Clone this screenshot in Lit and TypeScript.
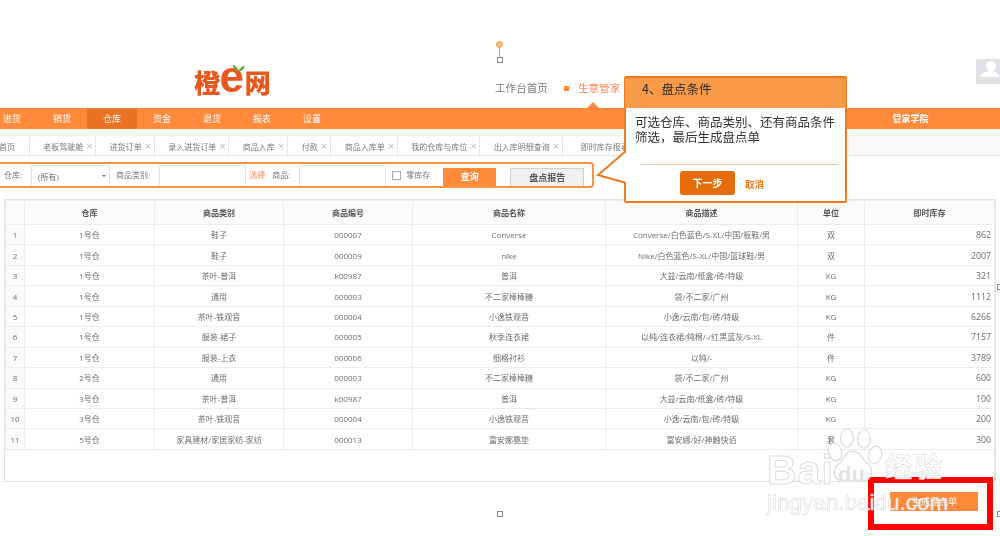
import { LitElement, html, css, svg } from "lit";
import { customElement } from "lit/decorators.js";

const NAV = ["进货", "销货", "仓库", "资金", "退货", "报表", "设置"];
const TABS: [string, number, boolean][] = [
  ["首页", 30, false], ["老板驾驶舱", 66, true], ["进货订单", 59, true], ["录入进货订单", 74, true],
  ["商品入库", 59, true], ["付款", 43, true], ["商品入库单", 67, true], ["我的仓库与库位", 82, true],
  ["出入库明细查询", 83, true], ["即时库存报表", 83, true],
];
const HEAD = ["", "仓库", "商品类别", "商品编号", "商品名称", "商品描述", "单位", "即时库存"];
const ROWS = [
  ["1号仓", "鞋子", "000007", "Converse", "Converse/白色蓝色/S-XL/中国/板鞋/男", "双", "862"],
  ["1号仓", "鞋子", "000009", "nike", "Nike/白色蓝色/S-XL/中国/篮球鞋/男", "双", "2007"],
  ["1号仓", "茶叶-普洱", "k00987", "普洱", "大益/云南/纸盒/砖/特级", "KG", "321"],
  ["1号仓", "通用", "000003", "不二家棒棒糖", "袋/不二家/广州", "KG", "1112"],
  ["1号仓", "茶叶-铁观音", "000004", "小逸铁观音", "小逸/云南/包/砖/特级", "KG", "6266"],
  ["1号仓", "服装-裙子", "000005", "秋季连衣裙", "以纯/连衣裙/纯棉/-/红黑蓝灰/S-XL", "件", "7157"],
  ["1号仓", "服装-上衣", "000006", "细格衬衫", "以纯/-", "件", "3789"],
  ["2号仓", "通用", "000003", "不二家棒棒糖", "袋/不二家/广州", "KG", "600"],
  ["3号仓", "茶叶-普洱", "k00987", "普洱", "大益/云南/纸盒/砖/特级", "KG", "100"],
  ["3号仓", "茶叶-铁观音", "000004", "小逸铁观音", "小逸/云南/包/砖/特级", "KG", "200"],
  ["5号仓", "家具建材/家居家纺-家纺", "000013", "富安娜靠垫", "富安娜/好/抻触快佰", "套", "300"],
];
const COLS = [19, 130, 129, 129, 193, 192, 67, 130];

@customElement("app-root")
export class AppRoot extends LitElement {
  static styles = css`
    :host { display: block; width: 1000px; height: 536px; overflow: hidden; background: #fff; }
    .page {
      position: relative; width: 1000px; height: 536px; overflow: hidden; background: #fff;
      font-family: "Open Sans", "Noto Sans CJK SC", sans-serif; font-size: 8px; color: #666;
      filter: blur(0.35px);
    }
    .top { height: 108px; box-sizing: border-box; display: flex; align-items: flex-start; padding-left: 194px; }
    .logo {
      position: relative; margin-top: 65px; width: 77px; height: 34px; display: flex; align-items: center;
      color: #e8581c; font-family: "Noto Sans CJK SC", sans-serif; font-weight: 900; font-size: 26.5px; line-height: 34px;
    }
    .logo .e { font-family: "Liberation Sans", sans-serif; font-size: 44px; line-height: 34px; width: 24px; text-align: center; font-weight: 700; transform: translate(-1px, -5px); flex: none; }
    .leaf { position: absolute; left: 38px; top: -1px; }
    .links { margin-left: 224px; margin-top: 81px; display: flex; align-items: center; font-size: 10.6px; line-height: 14px; color: #777; }
    .dot { width: 5px; height: 5px; background: #ff8a3c; margin-left: 16px; margin-right: 9px; }
    .cur { color: #ff8a5c; }
    .caret { position: absolute; left: 587px; top: 102px; width: 0; height: 0; border: 6px solid transparent; border-top: 0; border-bottom-color: #ff8a3c; }
    .nav { height: 21px; background: #ff8a3c; border-top: 1px solid #f58232; box-sizing: border-box; display: flex; margin-left: 0; color: #fff; font-size: 9px; line-height: 20px; overflow: hidden; }
    .nav .items { display: flex; margin-left: -13px; }
    .nav .it { width: 50px; text-align: center; }
    .nav .on { background: #ea7224; }
    .nav .academy { margin-left: auto; margin-right: 71px; width: 37px; text-align: center; font-weight: 700; white-space: nowrap; }
    .tabs { height: 27px; box-sizing: border-box; background: #fafafa; border-bottom: 1px solid #e4e4e4; padding-top: 8px; display: flex; font-size: 8px; color: #777; line-height: 17px; overflow: hidden; }
    .tab { box-sizing: border-box; border-right: 1px solid #e6e6e6; background: #fff; display: flex; justify-content: center; align-items: center; gap: 3px; white-space: nowrap; flex: none; padding-left: 11px; }
    .tab.first { padding: 0 14px 0 0; justify-content: flex-end; }
    .tab i { font-style: normal; color: #bbb; font-size: 11px; font-family: "Liberation Sans", sans-serif; }
    .filter {
      margin: 6px 0 0 -6px; width: 600px; height: 26px; box-sizing: border-box; border: 2px solid #fb9347; border-radius: 4px;
      display: flex; align-items: flex-end; padding-left: 8px; font-size: 8px; color: #777; overflow: hidden;
    }
    .filter > * { flex: none; }
    .lb { height: 22px; line-height: 22px; white-space: nowrap; }
    .sel { width: 79px; height: 21px; box-sizing: border-box; margin-left: 9px; border: 1px solid #e4e4e4; border-bottom: 0; padding-left: 6px; display: flex; align-items: center; justify-content: space-between; padding-right: 3px; color: #666; }
    .sel b { width: 0; height: 0; border: 2.5px solid transparent; border-bottom: 0; border-top-color: #666; }
    .inp { height: 21px; box-sizing: border-box; width: 87px; border: 1px solid #e4e4e4; border-bottom: 0; background: #fff; }
    .pick { color: #ff8a5c; margin-left: 3px; }
    .chk { width: 9px; height: 9px; border: 1px solid #aaa; box-sizing: border-box; margin: 0 5px 6px 6px; }
    .go { width: 53px; height: 18px; line-height: 18px; background: #ff8a3c; color: #fff; text-align: center; font-weight: 700; font-size: 9px; margin-left: 13px; }
    .rep { width: 74px; height: 18px; line-height: 17px; box-sizing: border-box; background: #f0f0f0; border: 1px solid #cfcfcf; border-bottom: 0; color: #555; text-align: center; font-weight: 700; font-size: 9px; margin-left: 14px; }
    .frame { margin: 11px 0 0 4px; width: 992px; height: 283px; box-sizing: border-box; border: 1px solid #e2e2e2; border-width: 1px 2px 1px 1px; }
    table { border-collapse: collapse; table-layout: fixed; width: 989px; }
    th, td { border: 1px solid #ececec; text-align: center; padding: 0; overflow: hidden; white-space: nowrap; font-weight: 400; }
    th { height: 23px; background: #fbfbfb; color: #555; font-weight: 700; }
    td { height: 19.45px; color: #6c6c6c; }
    td:first-child { background: #fafafa; }
    td:last-child { text-align: right; padding: 1px 3px 0 0; height: 18.45px; font-size: 8.8px; }
    .foot { display: flex; justify-content: flex-end; padding-right: 22px; margin-top: 10px; }
    .save { width: 88px; height: 19px; line-height: 19px; background: #ff8a3c; color: #fff; font-size: 9px; font-weight: 400; text-align: right; padding-right: 21px; box-sizing: border-box; }
    .handle { position: absolute; width: 4px; height: 4px; border: 1px solid #888; background: #fff; }
    .h-top { left: 497px; top: 57px; }
    .h-bot { left: 497px; top: 511px; }
    .h-r1 { left: 997px; top: 284px; }
    .h-r2 { left: 997px; top: 511px; }
    .knob { position: absolute; left: 496px; top: 41px; width: 5px; height: 5px; border: 1px solid #f59a3c; background: #fbc58c; border-radius: 50%; }
    .stem { position: absolute; left: 499px; top: 48px; width: 1px; height: 9px; background: #f59a3c; }
    .avatar { position: absolute; left: 976px; top: 59px; }
    .callout { position: absolute; left: 624px; top: 76px; width: 223px; height: 127px; box-sizing: border-box; border: 2px solid #ee7a1c; border-radius: 2px; background: #fff; font-family: "Noto Sans CJK SC", sans-serif; }
    .c-head { height: 30px; background: #f99a48; color: #2a2a2a; font-size: 12.5px; line-height: 22px; padding-left: 17px; margin: 0 -1px; }
    .c-body { padding: 7px 0 0 9px; font-size: 12.5px; line-height: 14.5px; color: #333; height: 39px; width: 205px; }
    .c-line { margin: 10px 7px 0 15px; height: 1px; background: #ffc89a; }
    .c-act { display: flex; align-items: center; margin: 6px 0 0 54px; }
    .next { width: 55px; height: 24px; line-height: 23px; background: #e46c0a; border-radius: 3px; color: #fff; text-align: center; font-weight: 700; font-size: 10px; }
    .cancel { margin-left: 10px; color: #ee7a1c; font-weight: 700; font-size: 9.5px; padding-top: 2px; }
    .ptr { position: absolute; left: 595px; top: 148px; }
    .red { position: absolute; left: 868px; top: 477px; width: 125px; height: 53px; box-sizing: border-box; border: 6px solid #ff0000; }
    .wm { position: absolute; left: 0; top: 0; width: 1000px; height: 536px; pointer-events: none; }
    .wm-text { position: absolute; color: rgba(255,255,255,.9); -webkit-text-stroke: 0.7px #dedede; white-space: nowrap; font-family: "Liberation Sans", sans-serif; }
    .bai { left: 767px; top: 450px; font-size: 41px; line-height: 40px; font-weight: 700; letter-spacing: 1px; -webkit-text-stroke: 1px #dcdcdc; }
    .du { left: 838px; top: 463px; font-size: 22px; line-height: 24px; color: #e2e2e2; font-weight: 700; -webkit-text-stroke: 0; }
    .jing { left: 885px; top: 450px; font-size: 27px; line-height: 32px; font-family: "Noto Sans CJK SC", sans-serif; font-weight: 700; letter-spacing: 3px; }
    .url { left: 767px; top: 489px; font-size: 22.5px; line-height: 28px; }
  `;

  render() {
    return html`<div class="page">
      <div class="top">
        <div class="logo">
          <span>橙</span><span class="e">e</span><span>网</span>
          <svg class="leaf" width="14" height="9" viewBox="0 0 14 9"><path d="M6 8C4 7 1 5 1 1c3 0 5 3 5 7z" fill="#6fae2e"/><path d="M7 8c0-4 3-6 6-6-1 3-3 5-6 6z" fill="#6fae2e"/></svg>
        </div>
        <div class="links"><span>工作台首页</span><span class="dot"></span><span class="cur">生意管家</span></div>
      </div>
      <div class="nav">
        <div class="items">${NAV.map((n, i) => html`<div class="it ${i === 2 ? "on" : ""}">${n}</div>`)}</div>
        <div class="academy">管家学院</div>
      </div>
      <div class="tabs">
        ${TABS.map(([t, w, x], i) => html`<div class="tab ${i === 0 ? "first" : ""}" style="width:${w}px">${t}${x ? html`<i>×</i>` : ""}</div>`)}
      </div>
      <div class="filter">
        <span class="lb">仓库:</span>
        <div class="sel"><span>(所有)</span><b></b></div>
        <span class="lb" style="margin-left:6px">商品类别:</span>
        <div class="inp" style="margin-left:9px"></div>
        <span class="lb pick">选择</span>
        <span class="lb" style="margin-left:7px">商品:</span>
        <div class="inp" style="margin-left:9px"></div>
        <span class="chk"></span>
        <span class="lb">零库存</span>
        <div class="go">查询</div>
        <div class="rep">盘点报告</div>
      </div>
      <div class="frame">
        <table>
          <colgroup>${COLS.map((w) => html`<col style="width:${w}px" />`)}</colgroup>
          <thead><tr>${HEAD.map((h) => html`<th>${h}</th>`)}</tr></thead>
          <tbody>${ROWS.map((r, i) => html`<tr><td>${i + 1}</td>${r.map((c) => html`<td>${c}</td>`)}</tr>`)}</tbody>
        </table>
      </div>
      <div class="foot"><div class="save">生成盘点单</div></div>

      <span class="caret"></span>
      <span class="knob"></span><span class="stem"></span>
      <span class="handle h-top"></span><span class="handle h-bot"></span>
      <span class="handle h-r1"></span><span class="handle h-r2"></span>
      <svg class="avatar" width="24" height="25" viewBox="0 0 24 25">
        <rect width="24" height="25" fill="#dfe1e4"/>
        <circle cx="15" cy="7" r="5" fill="#fff"/>
        <path d="M4 18c1-4 6-6 11-6s7 3 9 6z" fill="#fff"/>
      </svg>

      <div class="callout">
        <div class="c-head">4、盘点条件</div>
        <div class="c-body">可选仓库、商品类别、还有商品条件筛选，最后生成盘点单</div>
        <div class="c-line"></div>
        <div class="c-act"><div class="next">下一步</div><div class="cancel">取消</div></div>
      </div>
      <svg class="ptr" width="34" height="40" viewBox="0 0 34 40">
        <polyline points="31,3 3,27 31,35" fill="#fff" stroke="#ee7a1c" stroke-width="2"/>
      </svg>

      <div class="red"></div>

      <div class="wm">
        ${svg`<svg class="wm" viewBox="0 0 1000 536" width="1000" height="536">
          <g fill="rgba(255,255,255,.75)" stroke="#dcdcdc" stroke-width="1.2">
            <ellipse cx="835" cy="452" rx="6.5" ry="9" transform="rotate(-15 835 452)"/>
            <ellipse cx="847" cy="438" rx="6.5" ry="9"/>
            <ellipse cx="864" cy="439" rx="6.5" ry="9"/>
            <ellipse cx="875" cy="455" rx="6.5" ry="9" transform="rotate(15 875 455)"/>
            <path d="M853 451c7 0 9 8 15 13 6 6 4 17-6 17-4 0-6-1-9-1s-6 2-10 1c-10-1-11-11-5-16 6-5 7-14 15-14z"/>
          </g>
        </svg>`}
        <span class="wm-text bai">Bai</span>
        <span class="wm-text du">du</span>
        <span class="wm-text jing">经验</span>
        <span class="wm-text url">jingyan.baidu.com</span>
      </div>
    </div>`;
  }
}
